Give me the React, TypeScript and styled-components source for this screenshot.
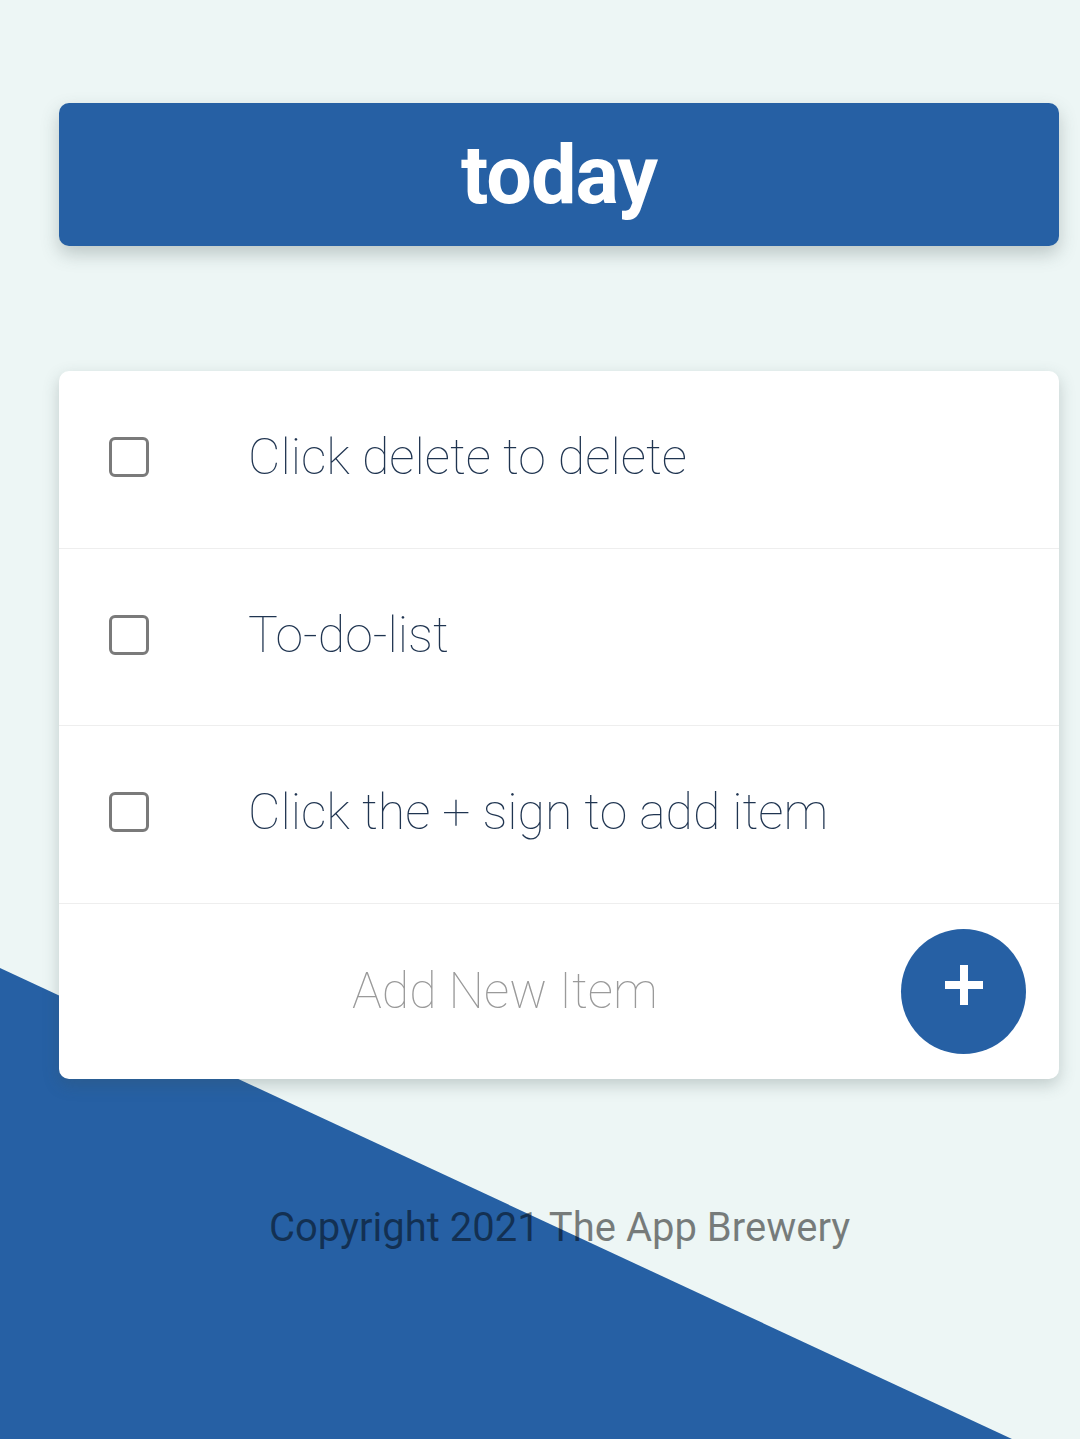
import React from "react";
import styled, { createGlobalStyle } from "styled-components";

const Global = createGlobalStyle`
  html, body {
    margin: 0;
    padding: 0;
    background: #edf6f5;
    font-family: Roboto, "Noto Sans", sans-serif;
  }
  #root { min-height: 1439px; }
`;

const Page = styled.div`
  position: relative;
  width: 1080px;
  min-height: 1439px;
  overflow: hidden;
  background: #edf6f5;
`;

const Backdrop = styled.div`
  position: absolute;
  inset: 0;
  background: #2660a4;
  clip-path: polygon(0 968px, 1012px 1439px, 0 1439px);
`;

const Content = styled.main`
  position: relative;
  display: flex;
  flex-direction: column;
  padding: 103px 21px 0 59px;
`;

const Heading = styled.header`
  height: 143px;
  border-radius: 10px;
  background: #2660a4;
  box-shadow: 0 8px 18px rgba(60, 80, 80, 0.28);
  display: flex;
  align-items: center;
  justify-content: center;
`;

const Title = styled.h1`
  margin: 0;
  color: #ffffff;
  font-family: Roboto, sans-serif;
  font-weight: 700;
  font-size: 81px;
  line-height: 1;
  letter-spacing: -1px;
  transform: translateY(1px);
`;

const Card = styled.section`
  margin-top: 125px;
  background: #ffffff;
  border-radius: 10px;
  box-shadow: 0 6px 16px rgba(60, 80, 80, 0.25);
  display: flex;
  flex-direction: column;
`;

const Row = styled.div`
  height: 176.5px;
  display: flex;
  align-items: center;
  padding-left: 50px;
  border-bottom: 1.5px solid #eeeeee;
`;

const Box = styled.span`
  width: 40px;
  height: 40px;
  box-sizing: border-box;
  border: 3px solid #7a7a7a;
  border-radius: 6px;
  flex: none;
  transform: translateY(-2px);
`;

const ItemText = styled.span`
  margin-left: 99px;
  font-family: Roboto, sans-serif;
  font-weight: 100;
  font-size: 50px;
  color: #1f3450;
  transform: translateY(-2px);
`;

const InputRow = styled.div`
  height: 175px;
  display: flex;
  align-items: center;
  padding-right: 33px;
`;

const Field = styled.div`
  flex: 1;
  padding-left: 293px;
  font-family: Roboto, sans-serif;
  font-weight: 100;
  font-size: 50px;
  color: #9a9a9a;
`;

const AddButton = styled.button`
  width: 125px;
  height: 125px;
  border-radius: 50%;
  border: none;
  background: #2660a4;
  display: flex;
  align-items: center;
  justify-content: center;
  padding: 0;
  flex: none;
  svg { transform: translateY(-6px); }
`;

const Footer = styled.footer`
  margin-top: 125px;
  padding-left: 210px;
  font-family: Roboto, sans-serif;
  font-size: 40px;
  color: rgba(0, 0, 0, 0.5);
`;

const items = ["Click delete to delete", "To-do-list", "Click the + sign to add item"];

export default function App() {
  return (
    <Page>
      <Global />
      <Backdrop />
      <Content>
        <Heading>
          <Title>today</Title>
        </Heading>
        <Card>
          {items.map((t) => (
            <Row key={t}>
              <Box />
              <ItemText>{t}</ItemText>
            </Row>
          ))}
          <InputRow>
            <Field>Add New Item</Field>
            <AddButton aria-label="add">
              <svg width="38" height="40" viewBox="0 0 38 40">
                <rect x="15" y="0" width="8" height="40" fill="#fff" />
                <rect x="0" y="16" width="38" height="8" fill="#fff" />
              </svg>
            </AddButton>
          </InputRow>
        </Card>
        <Footer>Copyright 2021 The App Brewery</Footer>
      </Content>
    </Page>
  );
}
